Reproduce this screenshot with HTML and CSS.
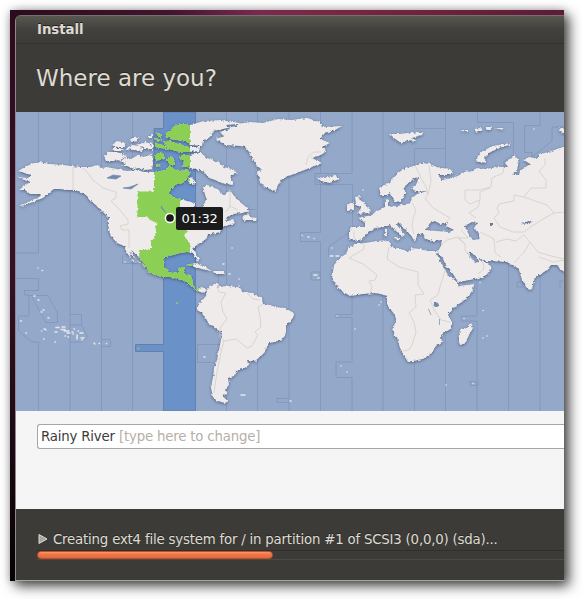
FILE: index.html
```html
<!DOCTYPE html>
<html lang="en">
<head>
<meta charset="utf-8">
<title>Install</title>
<link rel="stylesheet" href="styles.css">
</head>
<body>
<div class="desktop">
  <main class="window">
    <header class="titlebar">Install</header>
    <h1 class="heading">Where are you?</h1>
    <div class="map">
      <svg class="world" viewBox="16 112 548 299" width="548" height="299">
        <defs>
          <filter id="coast" x="0" y="100" width="582" height="330" filterUnits="userSpaceOnUse" color-interpolation-filters="sRGB">
            <feTurbulence type="fractalNoise" baseFrequency="0.35" numOctaves="2" seed="4" result="n"/>
            <feDisplacementMap in="SourceGraphic" in2="n" scale="3.5" xChannelSelector="R" yChannelSelector="G" result="d"/>
            <feGaussianBlur in="d" stdDeviation="0.25" result="shape"/>
            <feDropShadow in="shape" dx="0" dy="1" stdDeviation="1.6" flood-color="#26375a" flood-opacity="0.6"/>
          </filter>
          <path id="land" d="M18 171L25 167 31 164 40 162 50 164 63 165 72 166 82 167 90 167 98 165 102 168 107 167 117 169 127 171 137 170 144 172 154 172 160 171 166 170 169 166 174 169 180 171 188 170 190 173 187 178 185 182 177 184 171 188 169 193 173 197 180 199 187 201 195 203 195 208 200 212 203 210 203 205 207 200 205 195 203 187 208 185 213 187 219 190 221 194 225 195 230 190 235 197 240 202 245 206 250 211 243 213 233 214 227 217 225 222 233 219 235 223 222 227 220 232 208 235 205 240 197 245 193 248 195 253 199 258 198 262 195 257 193 253 187 252 180 253 173 255 165 257 163 263 165 269 172 273 178 272 179 267 185 267 183 273 192 277 193 285 196 289 202 287 207 290 204 293 197 291 192 287 187 282 181 280 170 277 162 277 155 275 148 272 147 267 140 258 131 250 136 260 148 267 145 267 137 261 129 252 131 258 138 264 133 261 127 253 124 246 117 243 110 235 108 225 109 218 104 213 98 207 91 201 87 196 81 192 75 190 68 190 60 189 54 189 50 192 43 198 33 202 25 205 17 207 30 201 39 197 42 194 30 194 25 190 19 190 24 186 30 182 24 180 18 177 28 178 31 175ZM104 157L108 152 115 152 120 153 127 156 122 160 112 161 106 161ZM111 145L118 141 126 143 124 147 117 147ZM130 139L138 137 138 141 131 142ZM127 147L133 145 144 147 142 151 133 150 126 149ZM112 148L120 148 124 151 116 151ZM119 161L125 157 131 159 138 155 144 157 152 154 153 163 152 169 145 170 139 168 134 169 127 166 122 166 126 163ZM137 145L145 142 151 144 153 150 145 149ZM147 136L153 135 153 139 149 139ZM150 142L153 143 153 147 150 145ZM154 138L162 139 161 141 155 140ZM155 143L163 145 170 146 168 149 160 148 155 147ZM157 132L162 135 160 137 156 135ZM155 155L160 152 165 155 163 159 157 161 155 158ZM156 164L160 165 159 167 156 167ZM165 136L167 132 171 131 173 127 181 124 190 125 204 121 220 120 240 123 236 126 223 129 213 131 210 137 203 141 202 146 190 145 187 142 177 140 170 139ZM163 141L169 141 176 143 182 145 190 147 200 147 199 151 189 152 180 152 172 150 164 150 170 147 165 144ZM166 159L171 156 174 160 175 165 170 165ZM179 157L183 155 190 155 196 153 201 153 207 158 219 162 224 167 232 169 238 173 230 176 233 185 224 184 215 180 209 178 204 172 196 169 190 168 182 165 184 161 181 160ZM187 181L191 177 196 182 193 185ZM216 139L225 136 219 132 230 129 226 125 237 124 250 122 263 123 278 119 292 120 307 118 320 122 322 127 342 126 335 130 325 133 320 139 330 143 322 147 327 151 321 155 312 158 322 163 307 169 297 173 283 178 278 185 276 191 270 189 265 187 260 182 257 173 261 169 256 165 254 161 250 153 245 147 240 146 225 145ZM242 218L248 213 250 217 257 218 256 221 246 221ZM187 265L194 263 203 266 212 271 202 269ZM213 271L223 271 225 274 215 274ZM317 177L325 178 335 175 339 179 330 183 321 181ZM206 296L207 290 211 285 218 283 220 287 227 286 238 287 243 292 253 293 262 298 263 304 270 305 275 307 285 308 294 313 293 318 286 325 286 333 282 340 270 343 266 347 265 352 260 357 255 361 247 360 249 365 243 369 237 370 234 376 228 378 229 385 225 390 227 393 223 397 229 401 225 403 217 401 213 397 211 388 213 378 214 368 217 360 220 345 222 333 215 328 208 323 202 313 197 310 199 303ZM356 244L365 243 377 241 389 240 391 247 400 249 409 252 411 248 420 249 428 251 438 251 436 254 440 260 445 270 448 275 457 282 459 286 474 284 473 290 465 300 453 308 448 315 452 322 452 328 441 335 442 342 436 346 432 353 423 359 408 362 406 358 400 348 397 338 392 330 396 322 395 315 387 305 387 296 380 294 375 293 363 294 350 296 340 290 335 283 332 278 334 265 340 258 347 253 348 248 354 245ZM434 303L438 303 439 306 435 307ZM471 323L473 328 465 343 460 345 458 339 460 330 467 328ZM347 205L354 202 354 210 347 211ZM355 197L360 196 359 199 363 202 367 207 371 210 368 213 357 214 361 208 356 205ZM438 252L439 255 442 257 447 267 453 274 458 282 470 280 483 277 489 273 492 267 485 262 480 258 478 262 475 263 468 253 472 253 478 260 487 261 507 262 512 265 515 266 519 270 522 280 529 290 532 289 535 277 541 274 547 270 551 265 557 265 560 269 566 273 566 146 557 149 549 152 539 154 537 159 529 157 524 160 530 164 520 171 519 175 512 175 517 171 519 160 514 155 508 160 505 163 508 167 499 167 485 169 476 168 472 171 461 172 460 175 452 178 442 180 438 175 450 175 453 172 450 169 437 167 430 164 422 163 410 167 405 168 398 173 390 182 379 188 381 195 387 195 390 193 395 202 401 201 406 194 403 188 412 180 418 178 417 183 412 188 415 192 427 191 417 194 412 198 410 203 397 206 388 207 388 199 385 200 385 207 377 210 372 215 358 218 365 222 365 227 351 227 349 231 349 238 355 241 363 239 368 232 375 228 385 227 390 225 396 231 402 237 405 235 397 225 398 222 407 231 412 237 415 242 417 235 423 233 425 239 434 241 442 240 441 245ZM426 230L430 223 435 221 440 225 448 222 446 226 454 230 448 232 437 231ZM465 226L472 222 478 223 474 227 477 232 480 239 473 240 469 235ZM521 223L530 221 533 222 523 224ZM490 223L493 223 493 226 490 226ZM394 237L400 238 399 240 395 239ZM385 229L387 229 387 236 385 235ZM475 161L480 153 492 146 511 143 509 145 499 148 489 153 484 158 488 163 479 162ZM390 134L400 134 407 133 423 132 422 135 412 138 417 141 407 140 402 144 394 138ZM462 130L468 130 468 132 463 132ZM474 129L480 128 483 130 476 132ZM487 127L492 127 490 130 486 130ZM496 128L504 128 500 130ZM558 129L566 127 566 134 560 132Z"/>
          <clipPath id="landClip"><use href="#land" clip-rule="evenodd"/></clipPath>
        </defs>
        <rect class="sea" x="16" y="112" width="548" height="299"/>
        <path class="zone-sea" d="M163.500 112H195.500V411H163.500V351.500H135.500V344.500H163.500V278L154 260V128.500H163.500Z"/>
        <path class="meridians" d="M38.500 112V253H16M16 278.500H38.500V290.500H24.500V295H29V316H18.500V331L32 342H38.500V411M70 112V342H81L87.500 337 81.500 325V314.500H70M70 342V411M101.500 112V411M101.500 339.500H110.500V346.500H101.500M132.500 112V411M122.500 255V263.500H138M31 295L46 322.500H57.500V313L48 295.500H29M70 325H81.500M226.500 112V411M226.500 209.500H257M257.500 112V411M289 112V411M320.500 112V173.500H315V184.500H352.500V230L328.500 247V257M315 173.500H352V112M320.500 184.500V232.500H300.500V241.500H320.500V411M311 272H320V280H311ZM196 264.500H187.500V268H196M218.500 274V284M197.500 344.500H222M197.500 344.500V362.500H218M289 398.500H277V402.500H289M383 112V411M414.500 362V411M414.500 112V128.500H445.500V112M414.500 180V148.500H445.500V170M445.500 128V149M352 296V314.500H336V317.500H352V362H336V377.500H352V411M445.500 335V411M477 282V316H461.500V321H477V411M477 381.500H470V385.500H478V381.500M508.500 265V411M477.500 112V122.500H513.500V155L504 161V167M540 112V125.500H524.500V152.500H532V157L552 141V127H564M540 275V411M517 282H523V287H517ZM564 281H560V288"/>
        <g class="continents" filter="url(#coast)">
          <use class="land" href="#land"/>
          <g clip-path="url(#landClip)">
            <path class="zone-land" d="M154 112H190V185L180 193V208L182 222 187 230 184 236 190 243V255L200 288 193 294 140 274 139 250H151V241L155 238 156.500 222 150 220 148 217H137.500V191.500H154Z"/>
          </g>
        </g>
        <path class="borders" d="M73 167V190M83 168L88 173 93 180 103 188 116 192V198L111 201 120 210 128 220V224L120 226 122 230H129V248M217 287L219 292 226 293 221 302 223 312 227 319 220 328V337L224 341 236 339 247 348 252 346 258 335 255 332 261 327 260 317 258 307 263 304M247 293L253 299 260 300M224 341L221 352 217 372 214 393M364 244L364 249 349 258 363 264 377 275 375 280 369 281 372 287 370 293M389 247L387 259 399 267 418 272 418 285 424 294 415 295 416 307 409 313 414 322 416 332 412 345 409 350 403 351M445 270L440 287 438 295 430 300 434 310 441 320 450 322M415 165L421 178 426 187 428 195 425 198 432 207 438 211 450 218 444 224M429 165L431 181 428 194M412 203L416 210 413 219 412 227 414 234M441 245L447 240 458 237 465 244 465 250 475 263M465 244L458 238 468 238 461 230M504 167L503 173 492 178 491 187 479 190 465 190 465 200 470 204 480 200 480 192 490 188M480 200L478 207 469 213 476 218M545 158V165L539 171 546 180 546 188H531L524 197 514 195V201L499 204 497 208 499 213 494 218 500 227 513 232 524 232 532 226 543 219 554 213 564 212M524 197L535 201 547 205 554 213M480 232L494 239 495 253 501 257M496 242L507 239 516 241 524 235 530 242 525 251 514 263M530 242L538 252 551 256 564 259M483 262L484 269 478 274M539 257L553 262 564 260M354 231V239M306 165L308 157 314 152 321 152M230 192V206L226 212M230 206L238 210"/>
        <path class="lakes" d="M107 178L113 175 121 176 116 179ZM123 188L130 187 138 184 131 189ZM434.500 303L438 303 437 306 434 306ZM428.500 309L431 315M439.500 319V325M161 206L166 213 162 209ZM218 285V288"/>
        <path class="islands" d="M41.500 331h.1M34 296h1M38 300h1M43 310h1M41 312h1M48 318h1M20.500 321h1M26 333h.5M44 329h1l1 1M43.500 339h.5M55 342h.5M56 327.500h3M62 327h3M61 329.500h4M55 332h2M64 331h5M67 333h3M74 329h.5M72 332h1M78 331h.5M65 336h.5M68 337h.5M73 334h.5M77 335v4M80 333h3M81 338h3M82 340h.5M94 343l1 1M99 343.500h.5M106.500 343.500h.1M38 268h.1M42 270.500h.5M125 262h.1M232 248h.1M204 357h1M229 274h1M239 279h.1M239 286h.1M223 264h1M302 235.500h.1M308 237h1M314 238.500h.1M332 248h.1M330 256h3M336 256h3M314 275h3M318 278h1M337 316h.1M355 329h.1M381 302h.1M379 305h.1M341 366h.1M347 372h.1M446 385h.1M473 383.500h.1M464 318.500h.1M483 310.500h.1M483 338h.1M487 336h.1M480 282.500h.1M241 395h4M290 401h1M363 190h.1M534 129h.1"/>
        <path class="zone-islands" d="M138.500 348.500h.1M177 303h.1"/>
        <circle class="pin" cx="170" cy="218" r="4.600"/>
      </svg>
      <div class="time">01:32</div>
    </div>
    <section class="form">
      <div class="field">Rainy River <span class="hint">[type here to change]</span></div>
    </section>
    <footer class="status">
      <div class="status-line">
        <svg class="expander" width="10" height="12"><path d="M1 1.500V10.500L9 6Z"/></svg>
        <span class="status-text">Creating ext4 file system for / in partition #1 of SCSI3 (0,0,0) (sda)...</span>
      </div>
      <div class="track"><div class="progress"></div></div>
    </footer>
  </main>
</div>
</body>
</html>
```
FILE: styles.css
```css
* { box-sizing: border-box; }
body {
  margin: 0;
  padding: 10px;
  height: 599px;
  overflow: hidden;
  background: #fff;
  font-family: "DejaVu Sans", sans-serif;
  font-size: 13.33px;
}
.desktop {
  width: 554px;
  height: 571px;
  padding: 5px 0 0 5px;
  background:
    linear-gradient(90deg, #2b0b20 0, #43142f 160px, #7a2950 250px, #782742 330px, #5c1b38 554px) 0 0 / 100% 6px no-repeat,
    linear-gradient(#2e0a21, #35102a 45%, #260b1d 65%, #050304);
  box-shadow: 5px 5px 12px rgba(0, 0, 0, .72), 0 0 8px rgba(0, 0, 0, .22);
}
.window {
  width: 549px;
  height: 566px;
  display: flex;
  flex-direction: column;
  border-left: 1px solid #8f8a82;
  border-bottom: 1px solid #aaa69d;
  border-top-left-radius: 6px;
  background: #3c3b37;
  color: #dfdbd2;
  overflow: hidden;
}
.titlebar {
  height: 29px;
  padding-left: 21px;
  border-top: 1px solid #73726b;
  border-bottom: 1px solid #32312e;
  background: linear-gradient(#57564f, #42413d 50%, #3c3b37);
  font-weight: bold;
  letter-spacing: -.05px;
  line-height: 27px;
  text-shadow: 0 -1px #22211f;
}
.heading {
  height: 68px;
  margin: 0;
  padding-left: 20px;
  font-size: 23px;
  font-weight: normal;
  line-height: 68px;
  text-shadow: 0 -1px #282724;
}
.map { position: relative; height: 299px; }
.world { display: block; }
.sea { fill: #94a8c9; }
.zone-sea { fill: #6b91c9; stroke: #6380b1; stroke-width: 1; }
.meridians { fill: none; stroke: #7d93b8; stroke-width: 1; opacity: .7; }
.land { fill: #eeebea; fill-rule: evenodd; }
.zone-land { fill: #8bcf54; }
.borders { fill: none; stroke: #d2cecc; stroke-width: .8; }
.lakes { fill: #7189b0; stroke: #7189b0; stroke-width: .7; }
.islands { fill: none; stroke: #e6e6e8; stroke-width: 1.5; stroke-linecap: round; }
.zone-islands { stroke: #8bcf54; stroke-width: 2; stroke-linecap: round; }
.pin { fill: #1b1b1b; stroke: #fff; stroke-width: 1.5; }
.time {
  position: absolute;
  left: 160px;
  top: 95px;
  width: 47px;
  height: 23px;
  border-radius: 2px;
  background: #1b1b1b;
  color: #fff;
  font-size: 13px;
  letter-spacing: -.3px;
  line-height: 23px;
  text-align: center;
}
.form {
  height: 98px;
  padding: 13px 0 0 21px;
  background: #f5f5f5;
}
.field {
  height: 25px;
  padding-left: 3px;
  border: 1px solid #aaa69d;
  border-right: 0;
  border-radius: 3px 0 0 3px;
  background: #fff;
  color: #3c3c3c;
  letter-spacing: -.19px;
  line-height: 23px;
}
.hint { color: #b5afa7; }
.status { flex: 1; padding: 20px 0 0 21px; }
.status-line { display: flex; align-items: center; height: 20px; white-space: nowrap; }
.expander { margin: 0 5px 0 1px; fill: #aaa69d; stroke: #dfdbd2; }
.status-text { letter-spacing: -.2px; text-shadow: 0 -1px #282724; }
.track {
  height: 10px;
  margin-top: 1px;
  border-top: 1px solid #302f2c;
  border-bottom: 1px solid #4c4b47;
}
.progress {
  width: 236px;
  height: 8px;
  border: 1px solid #b9502c;
  border-radius: 4px;
  background: linear-gradient(#f99b72, #f07746 35%, #e9683a);
}
```
